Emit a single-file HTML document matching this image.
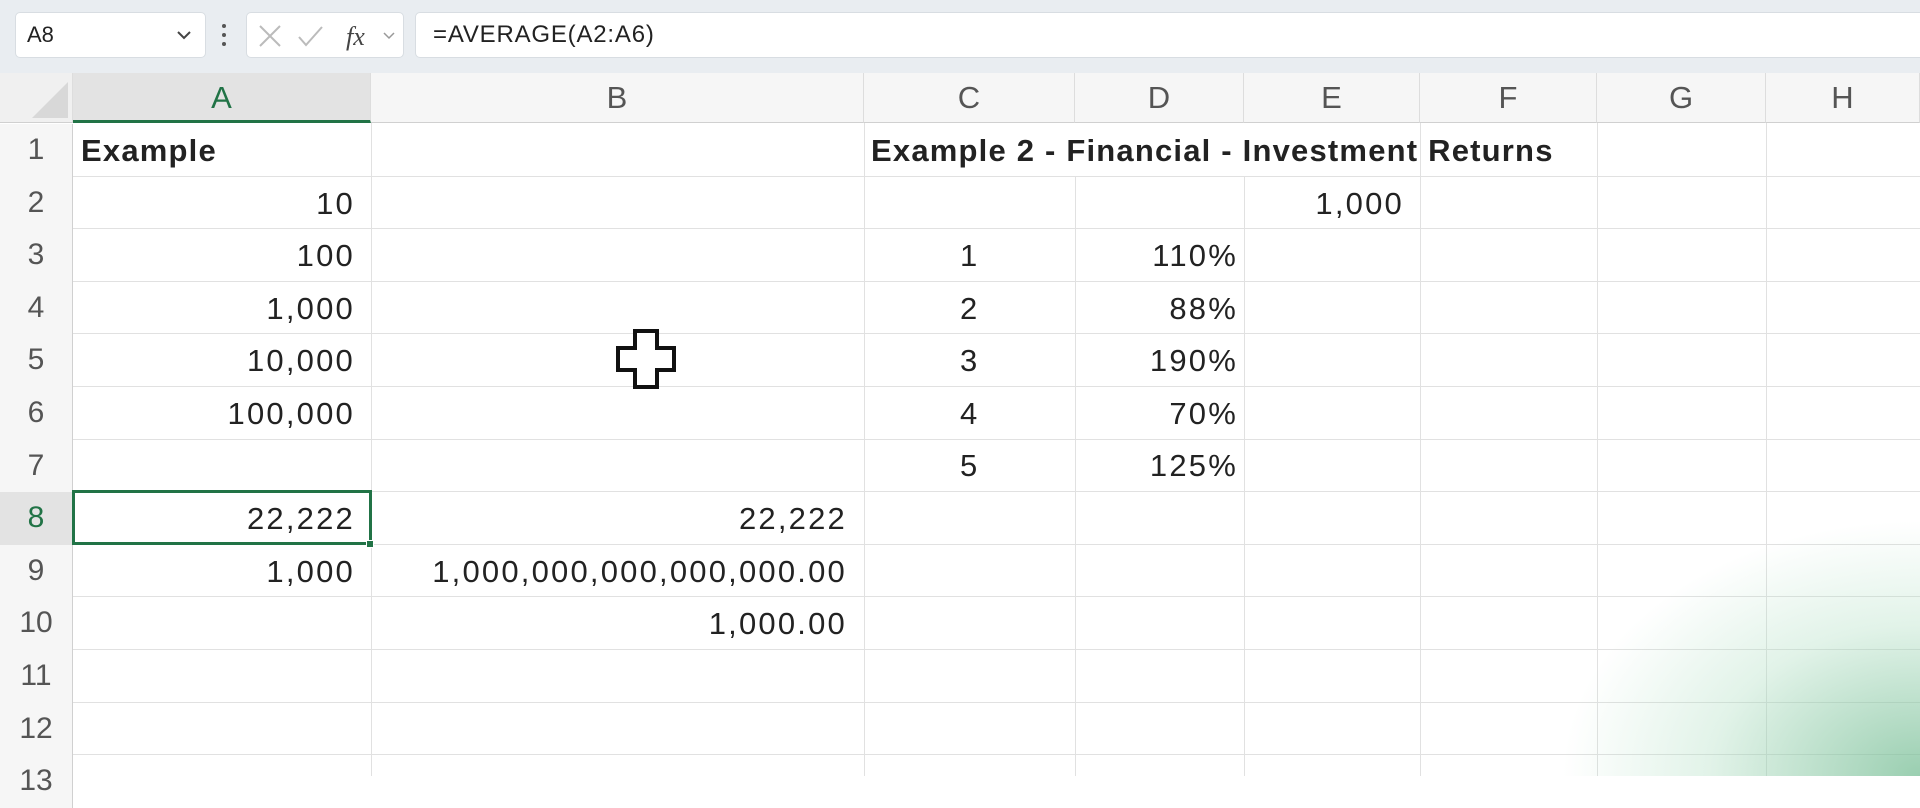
<!DOCTYPE html>
<html><head><meta charset="utf-8"><style>
*{margin:0;padding:0;box-sizing:border-box}
body{width:1920px;height:776px;overflow:hidden;background:#fff;position:relative;font-family:"Liberation Sans",sans-serif;color:#222}
.a{position:absolute}
.tb{left:0;top:0;width:1920px;height:73px;background:#e9edf1}
.box{background:#fff;border:1px solid #d8dde2;border-radius:5px;height:46px;top:12px}
.ch{top:73px;height:50px;background:#f6f6f6;border-bottom:1px solid #d0d0d0;font-size:31px;color:#555;text-align:center;line-height:50px;border-right:1px solid #ddd}
.rh{left:0;width:73px;height:53px;background:#f6f6f6;border-right:1px solid #d0d0d0;font-size:30px;color:#555;text-align:center;line-height:52px}
.hl{height:1px;background:#e1e1e1;left:0;width:1920px}
.vl{width:1px;background:#e1e1e1;top:123px;height:653px}
.t{font-size:31px;color:#222;white-space:nowrap;letter-spacing:2.2px}
.r{text-align:right}
</style></head><body>
<div class="a tb"></div>
<div class="a box" style="left:15px;width:191px"></div>
<div class="a" style="left:27px;top:22px;font-size:22px">A8</div>
<svg class="a" style="left:176px;top:29px" width="16" height="12"><path d="M2 3 L8 9 L14 3" stroke="#444" stroke-width="2" fill="none"/></svg>
<div class="a" style="left:222px;top:24px;width:4px;height:4px;background:#555;border-radius:2px"></div>
<div class="a" style="left:222px;top:33px;width:4px;height:4px;background:#555;border-radius:2px"></div>
<div class="a" style="left:222px;top:42px;width:4px;height:4px;background:#555;border-radius:2px"></div>
<div class="a box" style="left:246px;width:158px"></div>
<svg class="a" style="left:256px;top:22px" width="140" height="30"><path d="M4 4 L24 24 M24 4 L4 24" stroke="#bbb" stroke-width="2"/><path d="M43 15 L50 23 L66 5" stroke="#bbb" stroke-width="2" fill="none"/><text x="90" y="23" font-family="Liberation Serif" font-style="italic" font-size="26" fill="#444">fx</text><path d="M128 11 L133 16 L138 11" stroke="#999" stroke-width="1.5" fill="none"/></svg>
<div class="a box" style="left:415px;width:1520px"></div>
<div class="a" style="left:433px;top:21px;font-size:24px;letter-spacing:0.8px">=AVERAGE(A2:A6)</div>

<div class="a ch" style="left:0;width:73px;background:#f0f0f0"></div>
<svg class="a" style="left:30px;top:80px" width="40" height="40"><path d="M38 2 L38 38 L2 38 Z" fill="#d8d8d8"/></svg>
<div class="a ch" style="left:73px;width:298px;background:#e3e3e3;color:#217346;border-bottom:3px solid #217346">A</div>
<div class="a ch" style="left:371px;width:493px">B</div>
<div class="a ch" style="left:864px;width:211px">C</div>
<div class="a ch" style="left:1075px;width:169px">D</div>
<div class="a ch" style="left:1244px;width:176px">E</div>
<div class="a ch" style="left:1420px;width:177px">F</div>
<div class="a ch" style="left:1597px;width:169px">G</div>
<div class="a ch" style="left:1766px;width:154px">H</div>

<div class="a vl" style="left:371px"></div>
<div class="a vl" style="left:864px"></div>
<div class="a vl" style="left:1075px;top:176px;height:600px"></div>
<div class="a vl" style="left:1244px;top:176px;height:600px"></div>
<div class="a vl" style="left:1420px"></div>
<div class="a vl" style="left:1597px"></div>
<div class="a vl" style="left:1766px"></div>

<div class="a hl" style="top:176px"></div>
<div class="a hl" style="top:228px"></div>
<div class="a hl" style="top:281px"></div>
<div class="a hl" style="top:333px"></div>
<div class="a hl" style="top:386px"></div>
<div class="a hl" style="top:439px"></div>
<div class="a hl" style="top:491px"></div>
<div class="a hl" style="top:544px"></div>
<div class="a hl" style="top:596px"></div>
<div class="a hl" style="top:649px"></div>
<div class="a hl" style="top:702px"></div>
<div class="a hl" style="top:754px"></div>

<div class="a rh" style="top:124px">1</div>
<div class="a rh" style="top:177px">2</div>
<div class="a rh" style="top:229px">3</div>
<div class="a rh" style="top:282px">4</div>
<div class="a rh" style="top:334px">5</div>
<div class="a rh" style="top:387px">6</div>
<div class="a rh" style="top:440px">7</div>
<div class="a rh" style="top:492px;background:#e3e3e3;color:#217346">8</div>
<div class="a rh" style="top:545px">9</div>
<div class="a rh" style="top:597px">10</div>
<div class="a rh" style="top:650px">11</div>
<div class="a rh" style="top:703px">12</div>
<div class="a rh" style="top:755px">13</div>

<div class="a t" style="left:81px;top:133px;font-weight:bold;letter-spacing:1.2px">Example</div>
<div class="a t" style="left:871px;top:133px;font-weight:bold;letter-spacing:1.2px">Example 2 - Financial - Investment Returns</div>
<div class="a t r" style="left:73px;width:282px;top:186px">10</div>
<div class="a t r" style="left:73px;width:282px;top:238px">100</div>
<div class="a t r" style="left:73px;width:282px;top:291px">1,000</div>
<div class="a t r" style="left:73px;width:282px;top:343px">10,000</div>
<div class="a t r" style="left:73px;width:282px;top:396px">100,000</div>
<div class="a t r" style="left:73px;width:282px;top:501px">22,222</div>
<div class="a t r" style="left:73px;width:282px;top:554px">1,000</div>
<div class="a t r" style="left:371px;width:476px;top:501px">22,222</div>
<div class="a t r" style="left:371px;width:476px;top:554px">1,000,000,000,000,000.00</div>
<div class="a t r" style="left:371px;width:476px;top:606px">1,000.00</div>
<div class="a t r" style="left:1244px;width:160px;top:186px">1,000</div>
<div class="a t" style="left:960px;top:238px">1</div>
<div class="a t" style="left:960px;top:291px">2</div>
<div class="a t" style="left:960px;top:343px">3</div>
<div class="a t" style="left:960px;top:396px">4</div>
<div class="a t" style="left:960px;top:448px">5</div>
<div class="a t r" style="left:1075px;width:163px;top:238px">110%</div>
<div class="a t r" style="left:1075px;width:163px;top:291px">88%</div>
<div class="a t r" style="left:1075px;width:163px;top:343px">190%</div>
<div class="a t r" style="left:1075px;width:163px;top:396px">70%</div>
<div class="a t r" style="left:1075px;width:163px;top:448px">125%</div>

<div class="a" style="left:72px;top:490px;width:300px;height:55px;border:3px solid #217346"></div>
<div class="a" style="left:366px;top:540px;width:8px;height:8px;background:#217346;border:1px solid #fff"></div>

<svg class="a" style="left:614px;top:328px" width="66" height="64"><path d="M21 3 H43 V20 H60 V42 H43 V59 H21 V42 H4 V20 H21 Z" fill="#fff" stroke="#111" stroke-width="4"/></svg>

<div class="a" style="left:1500px;top:520px;width:420px;height:256px;background:radial-gradient(ellipse 420px 300px at 100% 100%,rgba(120,190,150,0.75),rgba(170,220,190,0.35) 50%,rgba(255,255,255,0) 85%);pointer-events:none"></div>
</body></html>
